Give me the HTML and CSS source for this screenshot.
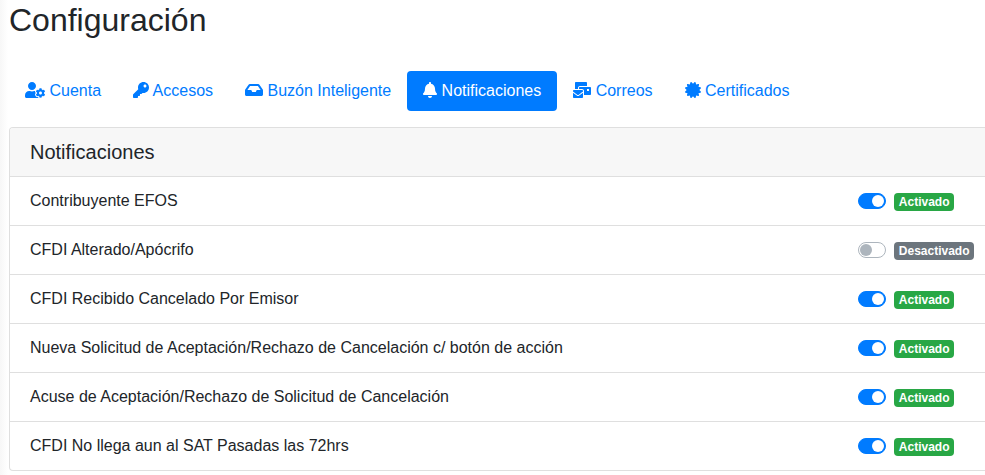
FILE: index.html
```html
<!DOCTYPE html>
<html lang="es">
<head>
<meta charset="utf-8">
<title>Configuración</title>
<link rel="stylesheet" href="styles.css">
</head>
<body>
<main class="page">
  <h2 class="title">Configuración</h2>
  <nav class="pills">
    <a class="pill"><svg class="icon w20" viewBox="0 0 640 512"><path d="M610.5 373.3c2.6-14.1 2.6-28.5 0-42.6l25.8-14.9c3-1.7 4.3-5.2 3.3-8.5-6.7-21.6-18.2-41.2-33.2-57.4-2.3-2.5-6-3.1-9-1.4l-25.8 14.9c-10.9-9.3-23.4-16.5-36.9-21.3v-29.8c0-3.4-2.4-6.4-5.7-7.1-22.3-5-45-4.8-66.2 0-3.3.7-5.7 3.7-5.7 7.1v29.8c-13.5 4.8-26 12-36.9 21.3l-25.8-14.9c-2.9-1.7-6.7-1.1-9 1.4-15 16.2-26.5 35.8-33.2 57.4-1 3.3.4 6.8 3.3 8.5l25.8 14.9c-2.6 14.1-2.6 28.5 0 42.6l-25.8 14.9c-3 1.7-4.3 5.2-3.3 8.5 6.7 21.6 18.2 41.1 33.2 57.4 2.3 2.5 6 3.1 9 1.4l25.8-14.9c10.9 9.3 23.4 16.5 36.9 21.3v29.8c0 3.4 2.4 6.4 5.7 7.1 22.3 5 45 4.8 66.2 0 3.3-.7 5.7-3.7 5.7-7.1v-29.8c13.5-4.8 26-12 36.9-21.3l25.8 14.9c2.9 1.7 6.7 1.1 9-1.4 15-16.2 26.5-35.8 33.2-57.4 1-3.3-.4-6.8-3.3-8.5l-25.8-14.9zM496 400.5c-26.8 0-48.5-21.8-48.5-48.5s21.8-48.5 48.5-48.5 48.5 21.8 48.5 48.5-21.7 48.5-48.5 48.5zM224 256c70.7 0 128-57.3 128-128S294.7 0 224 0 96 57.3 96 128s57.3 128 128 128zm201.2 226.5c-2.3-1.2-4.6-2.6-6.8-3.9l-7.9 4.6c-6 3.4-12.8 5.3-19.6 5.3-10.9 0-21.4-4.6-28.9-12.6-18.3-19.8-32.3-43.9-40.2-69.6-5.5-17.7 1.9-36.4 17.9-45.7l7.9-4.6c-.1-2.6-.1-5.2 0-7.8l-7.9-4.6c-16-9.2-23.4-28-17.9-45.7.9-2.9 2.2-5.8 3.2-8.7-3.8-.3-7.5-1.2-11.4-1.2h-16.7c-22.2 10.2-46.9 16-72.9 16s-50.6-5.8-72.9-16h-16.7C60.2 288 0 348.2 0 422.4V464c0 26.5 21.5 48 48 48h352c10.1 0 19.5-3.2 27.2-8.5-1.2-3.8-2-7.7-2-11.8v-9.2z"/></svg> Cuenta</a>
    <a class="pill"><svg class="icon w16" viewBox="0 0 512 512"><path d="M512 176.001C512 273.203 433.202 352 336 352c-11.22 0-22.19-1.062-32.827-3.069l-24.012 27.014A23.999 23.999 0 0 1 261.223 384H224v40c0 13.255-10.745 24-24 24h-40v40c0 13.255-10.745 24-24 24H24c-13.255 0-24-10.745-24-24v-78.059c0-6.365 2.529-12.47 7.029-16.971l161.802-161.802C163.108 213.814 160 195.271 160 176 160 78.798 238.797.001 335.999 0 433.488-.001 512 78.511 512 176.001zM336 128c0 26.51 21.49 48 48 48s48-21.49 48-48-21.49-48-48-48-48 21.49-48 48z"/></svg> Accesos</a>
    <a class="pill"><svg class="icon w18" viewBox="0 0 576 512"><path d="M567.938 243.908L462.25 85.374A48.003 48.003 0 0 0 422.311 64H153.689a48 48 0 0 0-39.938 21.374L8.062 243.908A47.994 47.994 0 0 0 0 270.533V400c0 26.51 21.49 48 48 48h480c26.51 0 48-21.49 48-48V270.533a47.994 47.994 0 0 0-8.062-26.625zM162.252 128h251.497l85.333 128H376l-32 64H232l-32-64H76.918l85.334-128z"/></svg> Buzón Inteligente</a>
    <a class="pill active"><svg class="icon w14" viewBox="0 0 448 512"><path d="M224 512c35.32 0 63.97-28.65 63.97-64H160.03c0 35.35 28.65 64 63.97 64zm215.39-149.71c-19.32-20.76-55.47-51.99-55.47-154.29 0-77.7-54.48-139.9-127.94-155.16V32c0-17.67-14.32-32-31.98-32s-31.98 14.33-31.98 32v20.84C118.56 68.1 64.08 130.3 64.08 208c0 102.3-36.15 133.53-55.47 154.29-6 6.45-8.66 14.16-8.61 21.71.11 16.4 12.98 32 32.1 32h383.8c19.12 0 32-15.6 32.1-32 .05-7.55-2.61-15.27-8.61-21.71z"/></svg> Notificaciones</a>
    <a class="pill"><svg class="icon w18" viewBox="0 0 576 512"><path d="M160 448c-25.6 0-51.2-22.4-64-32-64-44.8-83.2-60.8-96-70.4V480c0 17.67 14.33 32 32 32h256c17.67 0 32-14.33 32-32V345.6c-12.8 9.6-32 25.6-96 70.4-12.8 9.6-38.4 32-64 32zm128-192H32c-17.67 0-32 14.33-32 32v16c25.6 19.2 22.4 19.2 115.2 86.4 9.6 6.4 28.8 25.6 44.8 25.6s35.2-19.2 44.8-25.6c92.8-67.2 89.6-67.2 115.2-86.4V288c0-17.67-14.33-32-32-32zm256-96H224c-17.67 0-32 14.33-32 32v32h96c33.21 0 60.59 25.42 63.71 57.82l.29-.22V416h192c17.67 0 32-14.33 32-32V192c0-17.67-14.33-32-32-32zm-32 128h-64v-64h64v64zm-352-96c0-35.29 28.71-64 64-64h224V32c0-17.67-14.33-32-32-32H96C78.33 0 64 14.33 64 32v192h96v-32z"/></svg> Correos</a>
    <a class="pill"><svg class="icon w16" viewBox="0 0 512 512"><path d="M458.622 255.92l45.985-45.005c13.708-12.977 7.316-36.039-10.664-40.339l-62.65-15.99 17.661-62.015c4.991-17.838-11.829-34.663-29.661-29.671l-61.994 17.667-15.984-62.671C337.085.197 313.765-6.276 300.99 7.228L256 53.57 211.011 7.229c-12.63-13.351-36.047-7.234-40.325 10.668l-15.984 62.671-61.995-17.667C74.87 57.907 58.056 74.738 63.046 92.572l17.661 62.015-62.65 15.99C.069 174.878-6.31 197.944 7.392 210.915l45.985 45.005-45.985 45.004c-13.708 12.977-7.316 36.039 10.664 40.339l62.65 15.99-17.661 62.015c-4.991 17.838 11.829 34.663 29.661 29.671l61.994-17.667 15.984 62.671c4.439 18.575 27.696 24.018 40.325 10.668L256 458.61l44.989 46.001c12.5 13.488 35.987 7.486 40.325-10.668l15.984-62.671 61.994 17.667c17.836 4.994 34.651-11.837 29.661-29.671l-17.661-62.015 62.65-15.99c17.987-4.302 24.366-27.367 10.664-40.339l-45.984-45.004z"/></svg> Certificados</a>
  </nav>
  <section class="card">
    <h5 class="card-header">Notificaciones</h5>
    <ul class="list">
      <li class="row"><span class="label">Contribuyente EFOS</span><span class="switch on"></span><span class="badge success">Activado</span></li>
      <li class="row"><span class="label">CFDI Alterado/Apócrifo</span><span class="switch"></span><span class="badge muted">Desactivado</span></li>
      <li class="row"><span class="label">CFDI Recibido Cancelado Por Emisor</span><span class="switch on"></span><span class="badge success">Activado</span></li>
      <li class="row"><span class="label">Nueva Solicitud de Aceptación/Rechazo de Cancelación c/ botón de acción</span><span class="switch on"></span><span class="badge success">Activado</span></li>
      <li class="row"><span class="label">Acuse de Aceptación/Rechazo de Solicitud de Cancelación</span><span class="switch on"></span><span class="badge success">Activado</span></li>
      <li class="row"><span class="label">CFDI No llega aun al SAT Pasadas las 72hrs</span><span class="switch on"></span><span class="badge success">Activado</span></li>
    </ul>
  </section>
</main>
</body>
</html>
```
FILE: styles.css
```css
* { box-sizing: border-box; }
body {
  margin: 0;
  height: 475px;
  overflow: hidden;
  background: #fff linear-gradient(to right, #f7f7f7, #fff) no-repeat 0 0 / 8px 100%;
  color: #212529;
  font: 16px/24px "Liberation Sans", Arial, sans-serif;
}
.page { padding: 1px 0 0 9px; }
.title { margin: 0 0 32px; font-size: 32px; font-weight: 400; line-height: 38px; }
.pills { display: flex; margin-bottom: 16px; }
.pill { padding: 8px 16px; border-radius: 4px; color: #007bff; white-space: nowrap; }
.pill.active { background: #007bff; color: #fff; }
.icon { display: inline-block; height: 16px; vertical-align: -2px; fill: currentColor; overflow: visible; }
.w14 { width: 14px; }
.w16 { width: 16px; }
.w18 { width: 18px; }
.w20 { width: 20px; }
.card { border: 1px solid #dfdfdf; border-right: 0; border-radius: 4px 0 0 4px; overflow: hidden; }
.card-header {
  margin: 0;
  padding: 12px 20px;
  border-bottom: 1px solid #dfdfdf;
  background: #f7f7f7;
  font-size: 20px;
  font-weight: 400;
  line-height: 24px;
}
.list { margin: 0; padding: 0; list-style: none; }
.row { display: flex; align-items: center; height: 49px; padding: 0 0 0 20px; border-bottom: 1px solid #dfdfdf; }
.row:last-child { height: 48px; border-bottom: 0; }
.label { flex: 0 0 828px; }
.switch {
  display: flex;
  flex: none;
  align-items: center;
  width: 28px;
  height: 16px;
  margin-right: 8px;
  padding: 0 1px;
  border: 1px solid #adb5bd;
  border-radius: 8px;
  background: #fff;
}
.switch::before { content: ""; width: 12px; height: 12px; border-radius: 6px; background: #adb5bd; }
.switch.on { justify-content: flex-end; border-color: #007bff; background: #007bff; }
.switch.on::before { background: #fff; }
.badge {
  margin-top: 2px;
  padding: 3px 4.8px;
  border-radius: 4px;
  color: #fff;
  font-size: 12px;
  font-weight: 700;
  line-height: 12px;
}
.success { background: #28a745; }
.muted { background: #6c757d; }
```
